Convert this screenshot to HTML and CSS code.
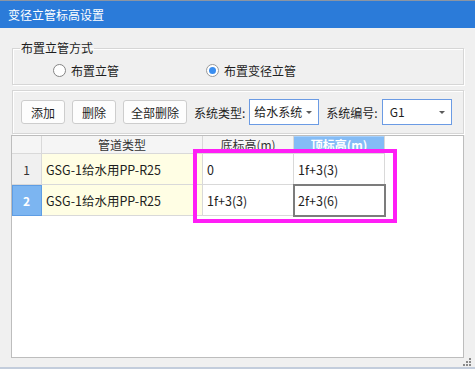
FILE: index.html
```html
<!DOCTYPE html>
<html lang="zh">
<head>
    <meta charset="UTF-8">
    <link rel="stylesheet" href="styles.css">
    <title>变径立管标高设置</title>
</head>
<body>
<div class="window">
    <div class="titlebar">变径立管标高设置</div>

    <fieldset class="group">
        <legend>布置立管方式</legend>
        <div class="radios">
            <label class="radio"><span class="dot"></span>布置立管</label>
            <label class="radio checked"><span class="dot"></span>布置变径立管</label>
        </div>
    </fieldset>

    <div class="toolbar">
        <button class="btn">添加</button>
        <button class="btn">删除</button>
        <button class="btn wide">全部删除</button>
        <span class="field">系统类型:<span class="select sys">给水系统</span></span>
        <span class="field">系统编号:<span class="select num">G1</span></span>
    </div>

    <div class="gridbox">
        <div class="grid">
            <div class="hd"></div>
            <div class="hd">管道类型</div>
            <div class="hd">底标高(m)</div>
            <div class="hd sel">顶标高(m)</div>

            <div class="rn">1</div>
            <div class="cell pipe">GSG-1给水用PP-R25</div>
            <div class="cell">0</div>
            <div class="cell">1f+3(3)</div>

            <div class="rn sel">2</div>
            <div class="cell pipe">GSG-1给水用PP-R25</div>
            <div class="cell">1f+3(3)</div>
            <div class="cell focus">2f+3(6)</div>
        </div>
        <div class="mark"></div>
    </div>

    <div class="footer">
        <svg class="grip" width="9" height="9" viewBox="0 0 9 9">
            <rect x="6" y="0" width="2" height="2" fill="#8a8a8a"/>
            <rect x="3" y="3" width="2" height="2" fill="#8a8a8a"/>
            <rect x="6" y="3" width="2" height="2" fill="#8a8a8a"/>
            <rect x="0" y="6" width="2" height="2" fill="#8a8a8a"/>
            <rect x="3" y="6" width="2" height="2" fill="#8a8a8a"/>
            <rect x="6" y="6" width="2" height="2" fill="#8a8a8a"/>
        </svg>
    </div>
</div>
</body>
</html>
```

FILE: styles.css
```css
* {
    box-sizing: border-box;
}

body {
    margin: 0;
    font-family: "Noto Sans CJK SC", "Noto Sans", sans-serif;
    font-size: 12px;
    color: #1e1e1e;
}

.window {
    width: 475px;
    height: 369px;
    background: #f0f0f0;
    border-top: 1px solid #8b95a3;
    border-bottom: 2px solid #c3cddc;
    display: flex;
    flex-direction: column;
}

.titlebar {
    height: 27px;
    line-height: 27px;
    padding-left: 8px;
    background: #2b7bd9;
    color: #fff;
    flex: none;
}

/* groupbox */
.group {
    margin: 12px 11px 0 12px;
    padding: 0 0 2px 0;
    border: 1px solid #d6d6d6;
    box-shadow: inset 1px 1px 0 #fff, 1px 1px 0 #fff;
    flex: none;
}

.group legend {
    margin-left: 7px;
    padding: 0 1px;
    line-height: 16px;
}

.radios {
    display: flex;
    align-items: center;
    height: 24px;
    margin-top: 2px;
    padding-left: 40px;
}

.radio {
    display: flex;
    align-items: center;
    gap: 5px;
    width: 153px;
}

.dot {
    width: 13px;
    height: 13px;
    border: 1px solid #858585;
    border-radius: 50%;
    background: #fff;
    position: relative;
}

.checked .dot {
    border-color: #9a9a9a;
}

.checked .dot::after {
    content: "";
    position: absolute;
    left: 2px;
    top: 2px;
    width: 7px;
    height: 7px;
    border-radius: 50%;
    background: #3a8ef0;
}

/* toolbar */
.toolbar {
    margin: 5px 11px 0 12px;
    height: 44px;
    border: 1px solid #d6d6d6;
    box-shadow: inset 1px 1px 0 #fff, 1px 1px 0 #fff;
    display: flex;
    align-items: center;
    gap: 7px;
    padding-left: 8px;
    flex: none;
}

.btn {
    width: 44px;
    height: 24px;
    padding: 0;
    background: #fdfdfd;
    border: 1px solid #cdcdcd;
    border-radius: 3px;
    font: inherit;
    color: inherit;
}

.btn.wide {
    width: 64px;
}

.field {
    display: flex;
    align-items: center;
    gap: 4px;
}

.select {
    height: 26px;
    line-height: 24px;
    background: #fff;
    border: 1px solid #6b9be4;
    padding-left: 5px;
    position: relative;
}

.select::after {
    content: "";
    position: absolute;
    right: 6px;
    top: 11px;
    border-left: 3px solid transparent;
    border-right: 3px solid transparent;
    border-top: 3px solid #5a5a5a;
}

.select.sys {
    width: 70px;
    padding-left: 4px;
}

.select.num {
    width: 70px;
    padding-left: 7px;
}

/* data grid */
.gridbox {
    margin: 1px 11px 0 11px;
    flex: 1;
    background: #fff;
    border: 1px solid #bdbdbd;
    position: relative;
}

.grid {
    display: grid;
    grid-template-columns: 30px 161px 91px 91px;
    grid-template-rows: 18px 31px 31px;
}

.grid > div {
    border-right: 1px solid #d9d9d9;
    border-bottom: 1px solid #d9d9d9;
    display: flex;
    align-items: center;
    white-space: nowrap;
}

.hd {
    justify-content: center;
    background: #f5f5f5;
    color: #333;
}

.hd.sel {
    background: #84bcf6;
    box-shadow: inset 0 1px 0 #a9d1fb;
    color: #fff;
    font-weight: bold;
}

.rn {
    justify-content: center;
    background: #f0f0f0;
    color: #333;
}

.grid > .rn.sel {
    background: #7cb5f1;
    border-color: #5e9de4;
    box-shadow: inset 1px 1px 0 #5e9de4;
    color: #fff;
    font-weight: bold;
}

.cell {
    padding-left: 4px;
    font-size: 12.5px;
}

.cell.pipe {
    background: #fffee4;
}

.cell.focus {
    outline: 2px solid #7c7c7c;
    outline-offset: -1px;
}

.mark {
    position: absolute;
    left: 181px;
    top: 13px;
    width: 204px;
    height: 74px;
    border: 4px solid #ff1ef6;
}

.footer {
    height: 9px;
    flex: none;
    display: flex;
    justify-content: flex-end;
    padding-right: 3px;
}
```
